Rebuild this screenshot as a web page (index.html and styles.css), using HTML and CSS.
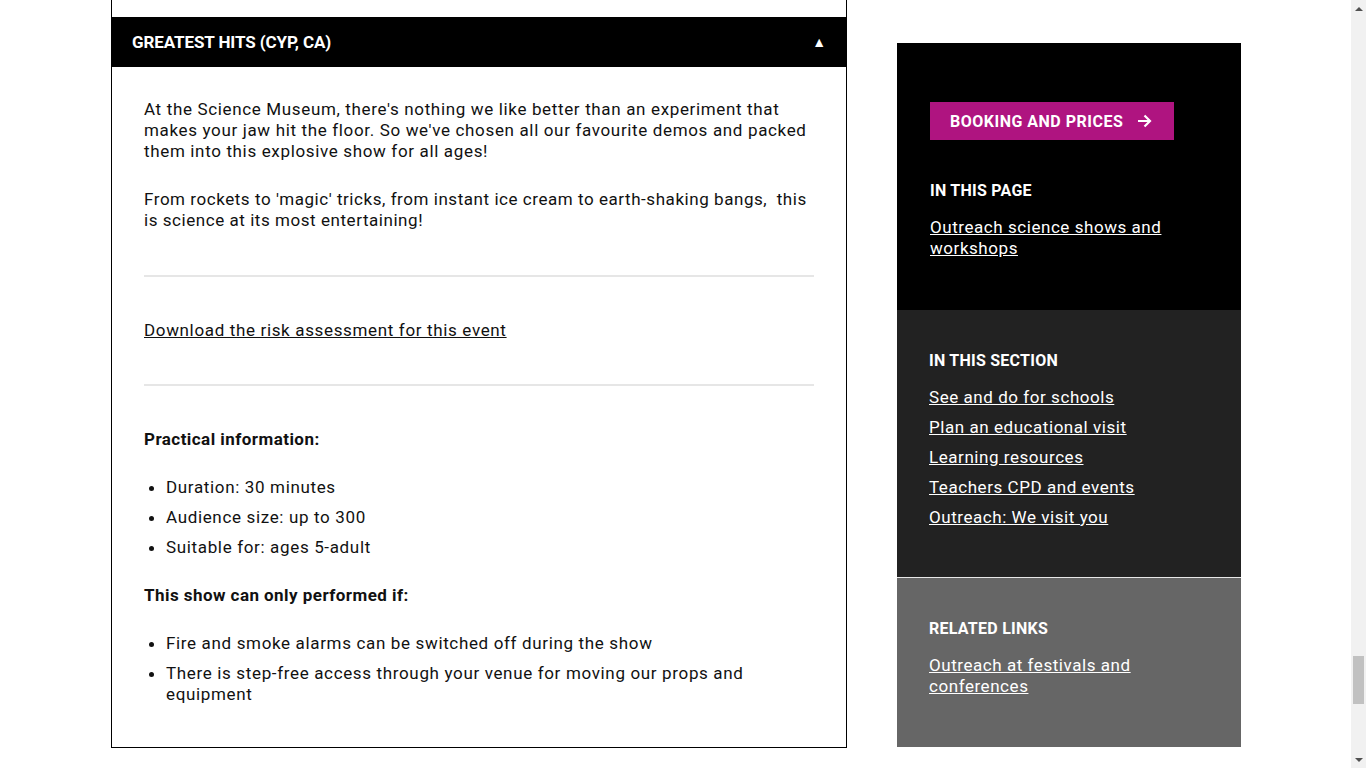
FILE: index.html
```html
<!DOCTYPE html>
<html lang="en">
<head>
<meta charset="utf-8">
<title>Greatest Hits (CYP, CA)</title>
<link rel="stylesheet" href="styles.css">
</head>
<body>
<div class="page">
  <main class="accordion">
    <div class="prev-tail"></div>
    <div class="acc-head">
      <span class="acc-title">GREATEST HITS (CYP, CA)</span>
      <span class="acc-toggle">&#9650;</span>
    </div>
    <div class="acc-body">
      <p>At the Science Museum, there's nothing we like better than an experiment that makes your jaw hit the floor. So we've chosen all our favourite demos and packed them into this explosive show for all ages!</p>
      <p class="snug">From rockets to 'magic' tricks, from instant ice cream to earth-shaking bangs,&nbsp; this is science at its most entertaining!</p>
      <div class="divider"></div>
      <p><a href="#" class="body-link">Download the risk assessment for this event</a></p>
      <div class="divider tight"></div>
      <p class="strong">Practical information:</p>
      <ul>
        <li>Duration: 30 minutes</li>
        <li>Audience size: up to 300</li>
        <li>Suitable for: ages 5-adult</li>
      </ul>
      <p class="strong">This show can only performed if:</p>
      <ul>
        <li>Fire and smoke alarms can be switched off during the show</li>
        <li>There is step-free access through your venue for moving our props and equipment</li>
      </ul>
    </div>
  </main>
  <aside class="sidebar">
    <section class="side side-black">
      <a href="#" class="book-btn">BOOKING AND PRICES
        <svg class="arrow" width="15" height="14" viewBox="0 0 15 14" aria-hidden="true"><path d="M1 7H13M7.5 1.5L13 7L7.5 12.5" fill="none" stroke="#fff" stroke-width="2.2"/></svg>
      </a>
      <h3 class="side-title first">IN THIS PAGE</h3>
      <ul class="side-links">
        <li><a href="#">Outreach science shows and workshops</a></li>
      </ul>
    </section>
    <section class="side side-dark">
      <h3 class="side-title">IN THIS SECTION</h3>
      <ul class="side-links spaced">
        <li><a href="#">See and do for schools</a></li>
        <li><a href="#">Plan an educational visit</a></li>
        <li><a href="#">Learning resources</a></li>
        <li><a href="#">Teachers CPD and events</a></li>
        <li><a href="#">Outreach: We visit you</a></li>
      </ul>
    </section>
    <section class="side side-grey">
      <h3 class="side-title">RELATED LINKS</h3>
      <ul class="side-links">
        <li><a href="#">Outreach at festivals and conferences</a></li>
      </ul>
    </section>
  </aside>
</div>
<div class="scrollbar">
  <div class="sb-btn"><span class="sb-up"></span></div>
  <div class="sb-track"><div class="sb-thumb"></div></div>
  <div class="sb-btn"><span class="sb-down"></span></div>
</div>
</body>
</html>
```
FILE: styles.css
```css
html, body {
  margin: 0;
  padding: 0;
  height: 768px;
  overflow: hidden;
  background: #fff;
}
body {
  display: flex;
  font-family: Roboto, "Noto Sans", sans-serif;
  color: #111;
}
.page {
  flex: 1;
  display: flex;
  align-items: flex-start;
  padding-left: 111px;
  gap: 50px;
}
.accordion {
  width: 734px;
  border: 1px solid #000;
  border-top: none;
}
.prev-tail {
  height: 17px;
}
.acc-head {
  height: 50px;
  background: #000;
  color: #fff;
  display: flex;
  align-items: center;
  justify-content: space-between;
  padding: 0 20px;
}
.acc-title {
  font-weight: 700;
  font-size: 17px;
  letter-spacing: -0.1px;
}
.acc-toggle {
  font-size: 14px;
  line-height: 1;
}
.acc-body {
  padding: 32px 32px 42px;
  font-size: 17px;
  line-height: 21px;
  letter-spacing: 0.65px;
}
.acc-body p {
  margin: 0 0 27px;
}
.acc-body p.snug {
  letter-spacing: 0.55px;
}
.acc-body p.strong {
  font-weight: 700;
  letter-spacing: 0.45px;
}
.divider {
  border-top: 2px solid #e6e6e6;
  margin: 44px 0 43px;
}
.divider.tight {
  margin-top: 43px;
}
.acc-body ul {
  margin: 0 0 27px;
  padding-left: 22px;
}
.acc-body ul:last-child {
  margin-bottom: 0;
}
.acc-body li {
  margin-bottom: 9px;
}
.acc-body li:last-child {
  margin-bottom: 0;
}
.body-link {
  color: #111;
  text-decoration: underline;
}
.sidebar {
  width: 344px;
  margin-top: 43px;
  color: #fff;
}
.side {
  padding: 40px 32px 49px;
}
.side-black {
  background: #000;
  padding: 59px 33px 51px;
}
.side-dark {
  background: #222;
  border-bottom: 1px solid #e8e8e8;
}
.side-grey {
  background: #666;
  padding-bottom: 50px;
}
.book-btn {
  display: inline-flex;
  align-items: center;
  gap: 14px;
  height: 38px;
  box-sizing: border-box;
  padding: 0 22px 0 20px;
  background: #af1480;
  color: #fff;
  text-decoration: none;
  font-weight: 700;
  font-size: 16px;
  letter-spacing: 0.5px;
}
.arrow {
  display: block;
}
.side-title {
  margin: 0 0 16px;
  font-size: 16px;
  line-height: 21px;
  font-weight: 700;
  letter-spacing: 0.25px;
}
.side-title.first {
  margin-top: 40px;
}
.side-links {
  list-style: none;
  margin: 0;
  padding: 0;
  font-size: 17px;
  line-height: 21px;
  letter-spacing: 0.55px;
}
.side-links.spaced li + li {
  margin-top: 9px;
}
.side-links a {
  color: #fff;
  text-decoration: underline;
}
.scrollbar {
  width: 15px;
  background: #f1f1f1;
  display: flex;
  flex-direction: column;
}
.sb-btn {
  height: 17px;
  display: flex;
  align-items: center;
  justify-content: center;
}
.sb-up {
  width: 0;
  height: 0;
  border-left: 4px solid transparent;
  border-right: 4px solid transparent;
  border-bottom: 4px solid #505050;
}
.sb-down {
  width: 0;
  height: 0;
  border-left: 4px solid transparent;
  border-right: 4px solid transparent;
  border-top: 4px solid #505050;
}
.sb-track {
  flex: 1;
  display: flex;
  flex-direction: column;
  padding: 639px 2px 0;
}
.sb-thumb {
  height: 48px;
  background: #c1c1c1;
}
```
